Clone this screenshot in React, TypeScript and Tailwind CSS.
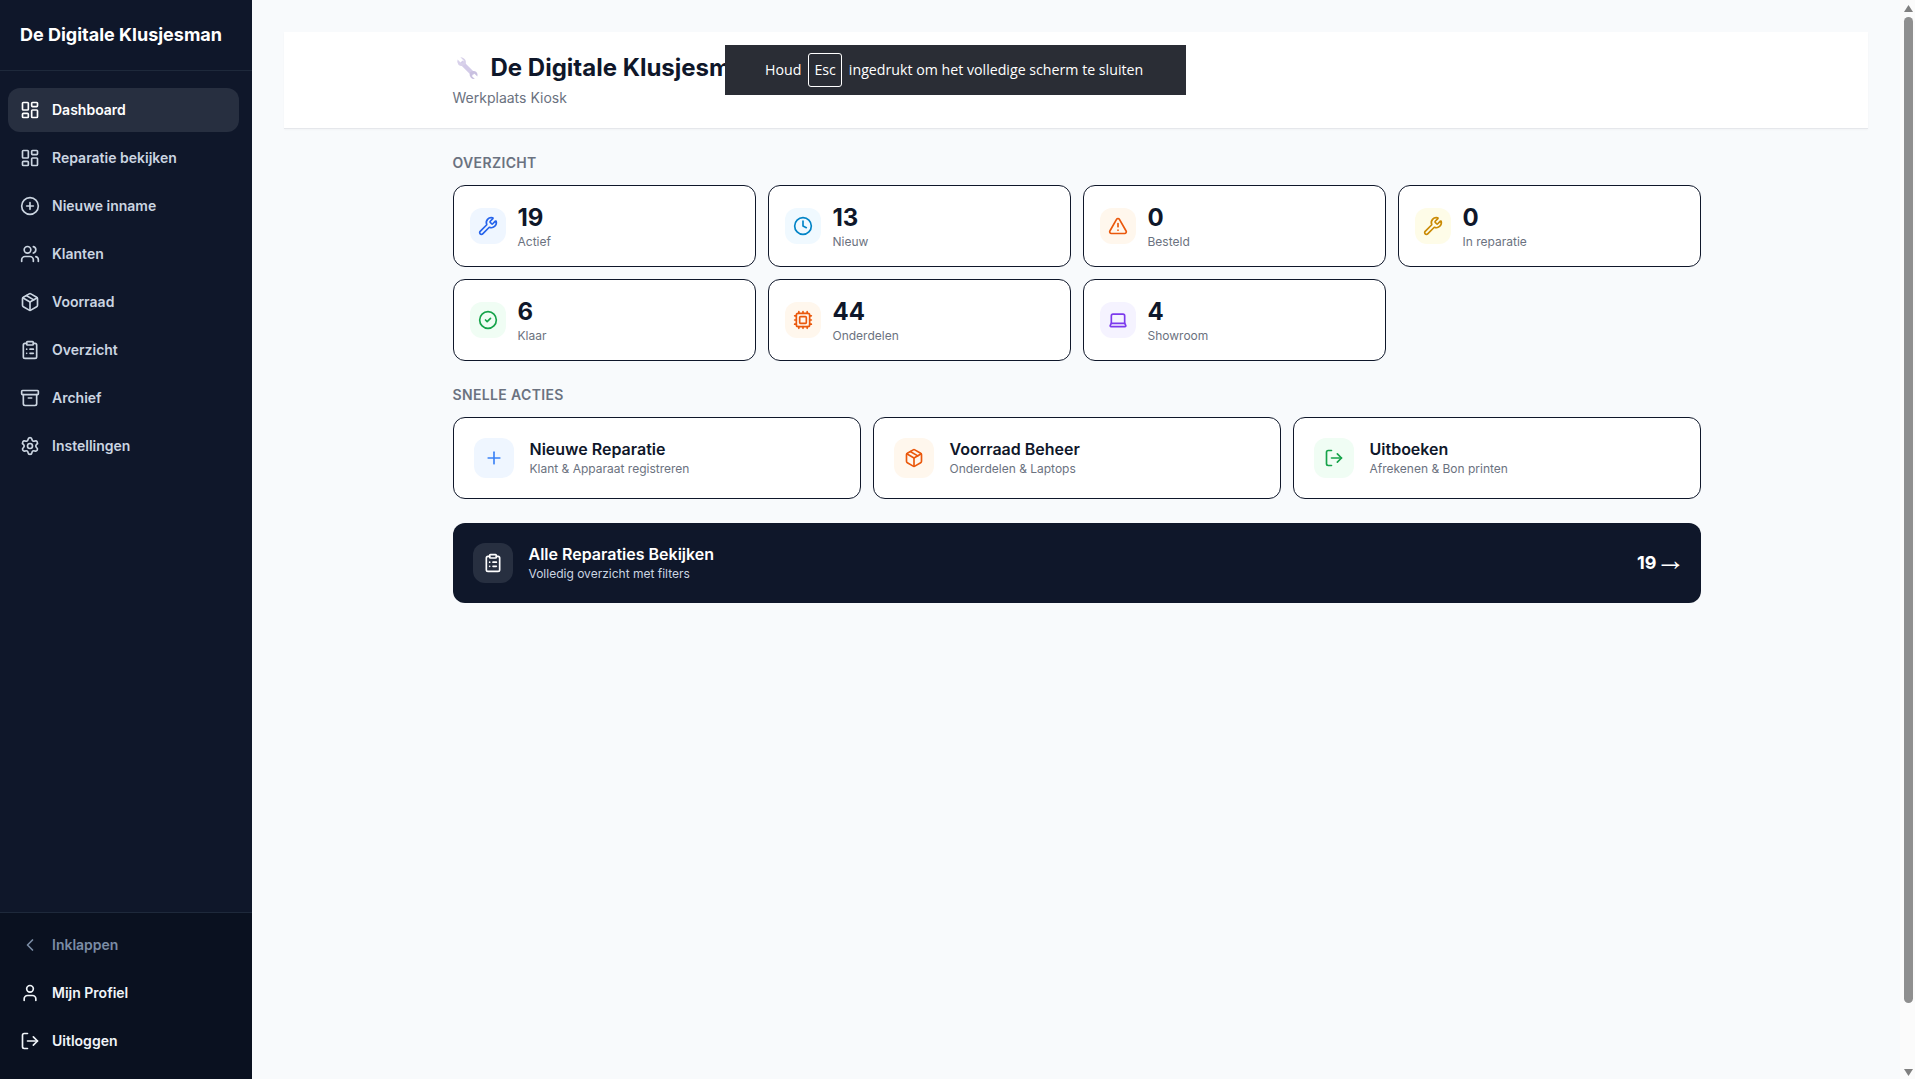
import { LayoutDashboard, CirclePlus, Users, Package, ClipboardList, Archive, Settings, ChevronLeft, User, LogOut, Wrench, Clock, TriangleAlert, CircleCheck, Cpu, Laptop, Plus } from "lucide-react";
import type { ComponentType } from "react";

type Icon = ComponentType<{ className?: string; size?: number; strokeWidth?: number }>;

const nav: { label: string; icon: Icon; active?: boolean }[] = [
  { label: "Dashboard", icon: LayoutDashboard, active: true },
  { label: "Reparatie bekijken", icon: LayoutDashboard },
  { label: "Nieuwe inname", icon: CirclePlus },
  { label: "Klanten", icon: Users },
  { label: "Voorraad", icon: Package },
  { label: "Overzicht", icon: ClipboardList },
  { label: "Archief", icon: Archive },
  { label: "Instellingen", icon: Settings },
];

const stats: { value: string; label: string; icon: Icon; box: string; color: string }[] = [
  { value: "19", label: "Actief", icon: Wrench, box: "bg-[#eff6ff]", color: "text-[#2563eb]" },
  { value: "13", label: "Nieuw", icon: Clock, box: "bg-[#f0f9ff]", color: "text-[#0284c7]" },
  { value: "0", label: "Besteld", icon: TriangleAlert, box: "bg-[#fff7ed]", color: "text-[#ea580c]" },
  { value: "0", label: "In reparatie", icon: Wrench, box: "bg-[#fefce8]", color: "text-[#ca8a04]" },
  { value: "6", label: "Klaar", icon: CircleCheck, box: "bg-[#f0fdf4]", color: "text-[#16a34a]" },
  { value: "44", label: "Onderdelen", icon: Cpu, box: "bg-[#fff7ed]", color: "text-[#ea580c]" },
  { value: "4", label: "Showroom", icon: Laptop, box: "bg-[#f5f3ff]", color: "text-[#7c3aed]" },
];

const actions: { title: string; sub: string; icon: Icon; box: string; color: string }[] = [
  { title: "Nieuwe Reparatie", sub: "Klant & Apparaat registreren", icon: Plus, box: "bg-[#eff6ff]", color: "text-[#3b82f6]" },
  { title: "Voorraad Beheer", sub: "Onderdelen & Laptops", icon: Package, box: "bg-[#fff7ed]", color: "text-[#ea580c]" },
  { title: "Uitboeken", sub: "Afrekenen & Bon printen", icon: LogOut, box: "bg-[#f0fdf4]", color: "text-[#16a34a]" },
];

function SideItem({ label, icon: I, cls }: { label: string; icon: Icon; cls: string }) {
  return (
    <div className={`flex h-11 items-center gap-3 rounded-xl px-3 text-sm font-semibold ${cls}`}>
      <I size={20} strokeWidth={2} className="shrink-0" />
      <span>{label}</span>
    </div>
  );
}

function WrenchEmoji() {
  return (
    <span className="flex w-[26px] shrink-0 items-center justify-end">
      <svg width="24" height="24" viewBox="0 0 24 24" fill="none">
        <path d="M6 6 18.5 18.5" stroke="#d3cbe8" strokeWidth="4.5" />
        <path d="M2.6 3.6 6 7l2-.6.6-2L5.4 1.3A5 5 0 0 1 10.6 8a5 5 0 0 1-7 .9A5 5 0 0 1 2.6 3.6Z" fill="#d8d1ea" />
        <path d="M22.4 20.6 19.2 17.6l-1.8.5-.6 1.9 3 3a4.6 4.6 0 0 1-4.8-6.4 4.6 4.6 0 0 1 6.4-.6 4.6 4.6 0 0 1 1 4.6Z" fill="#c9c0e0" />
      </svg>
    </span>
  );
}

export default function App() {
  return (
    <div className="flex h-[1079px] w-full overflow-hidden bg-[#f8fafc] font-['Inter',sans-serif] text-[#0f172a]">
      <aside className="flex w-[252px] shrink-0 flex-col bg-[#0f172a]">
        <div className="flex h-[71px] items-center border-b border-[#1e293b] px-5 text-lg font-bold text-white">
          De Digitale Klusjesman
        </div>
        <nav className="flex flex-1 flex-col gap-1 pt-[17px] pr-[13px] pl-2">
          {nav.map((n) => (
            <SideItem key={n.label} label={n.label} icon={n.icon} cls={n.active ? "bg-[#272f40] text-white" : "text-[#cbd5e1]"} />
          ))}
        </nav>
        <div className="flex h-[167px] flex-col gap-1 border-t border-[#1e293b] bg-[#0a1120] pt-[10px] pr-[13px] pl-2">
          <SideItem label="Inklappen" icon={ChevronLeft} cls="text-[#7b8ca5]" />
          <SideItem label="Mijn Profiel" icon={User} cls="text-[#f1f5f9]" />
          <SideItem label="Uitloggen" icon={LogOut} cls="text-[#f1f5f9]" />
        </div>
      </aside>

      <main className="flex min-w-0 flex-1 flex-col px-8 pt-8">
        <header className="h-[97px] shrink-0 border-b border-[#e5e7eb] bg-white shadow-[0_1px_2px_rgba(0,0,0,0.03)]">
          <div className="mx-auto max-w-7xl pt-[20px] pr-[15.5px] pl-[16.5px]">
            <div className="flex items-center gap-3 text-2xl font-bold">
              <WrenchEmoji />
              <span>De Digitale Klusjesman</span>
            </div>
            <div className="mt-1 text-sm text-[#6b7280]">Werkplaats Kiosk</div>
          </div>
        </header>

        <div className="mx-auto w-full max-w-7xl pr-[15.5px] pl-[16.5px]">
          <h2 className="mt-[24px] mb-[12px] text-sm font-semibold tracking-wide text-[#6b7280] uppercase">Overzicht</h2>
          <div className="grid grid-cols-4 gap-3">
            {stats.map((s) => (
              <div key={s.label} className="flex h-[82px] items-center gap-3 rounded-xl border border-[#0f172a] bg-white px-4">
                <div className={`flex size-9 shrink-0 items-center justify-center rounded-xl ${s.box}`}>
                  <s.icon size={20} className={s.color} />
                </div>
                <div>
                  <div className="text-2xl leading-8 font-bold">{s.value}</div>
                  <div className="text-xs text-[#6b7280]">{s.label}</div>
                </div>
              </div>
            ))}
          </div>

          <h2 className="mt-[24px] mb-[12px] text-sm font-semibold tracking-wide text-[#6b7280] uppercase">Snelle acties</h2>
          <div className="grid grid-cols-3 gap-3">
            {actions.map((a) => (
              <div key={a.title} className="flex h-[82px] items-center gap-4 rounded-xl border border-[#0f172a] bg-white px-5">
                <div className={`flex size-10 shrink-0 items-center justify-center rounded-xl ${a.box}`}>
                  <a.icon size={20} className={a.color} />
                </div>
                <div>
                  <div className="text-base leading-5 font-semibold">{a.title}</div>
                  <div className="mt-[2px] text-xs text-[#6b7280]">{a.sub}</div>
                </div>
              </div>
            ))}
          </div>

          <div className="mt-6 flex h-20 items-center gap-4 rounded-xl bg-[#0f172a] px-5 text-white">
            <div className="flex size-10 shrink-0 items-center justify-center rounded-xl bg-[#272f40]">
              <ClipboardList size={20} />
            </div>
            <div className="flex-1">
              <div className="text-base leading-5 font-semibold">Alle Reparaties Bekijken</div>
              <div className="mt-[2px] text-xs text-[#cbd5e1]">Volledig overzicht met filters</div>
            </div>
            <div className="flex items-center text-lg font-bold">
              <span>19</span>
              <span className="mr-[-5px] ml-[-1px] pb-[7px] font-['Liberation_Sans',sans-serif] text-[30px] leading-none font-bold">→</span>
            </div>
          </div>
        </div>
      </main>

      <div className="flex w-[15px] shrink-0 flex-col items-center bg-[#fbfbfb] pl-[2px]">
        <svg width="9" height="7" viewBox="0 0 9 7" className="mt-[5px] shrink-0 fill-[#808080]"><path d="M4.5 0 9 7H0z" /></svg>
        <div className="mt-[5px] h-[986px] w-[9px] rounded-full bg-[#8f8f8f]" />
        <svg width="9" height="7" viewBox="0 0 9 7" className="mt-auto mb-[3px] shrink-0 fill-[#808080]"><path d="M0 0h9L4.5 7z" /></svg>
      </div>

      <div className="absolute top-[45px] left-[725px] flex h-[50px] w-[461px] items-center gap-[7px] bg-[#2a2d35] pl-10 font-['Open_Sans',sans-serif] text-[14.2px] text-white">
        <span>Houd</span>
        <span className="flex h-[34px] items-center rounded-[3px] border border-white px-[5px]">Esc</span>
        <span>ingedrukt om het volledige scherm te sluiten</span>
      </div>
    </div>
  );
}
